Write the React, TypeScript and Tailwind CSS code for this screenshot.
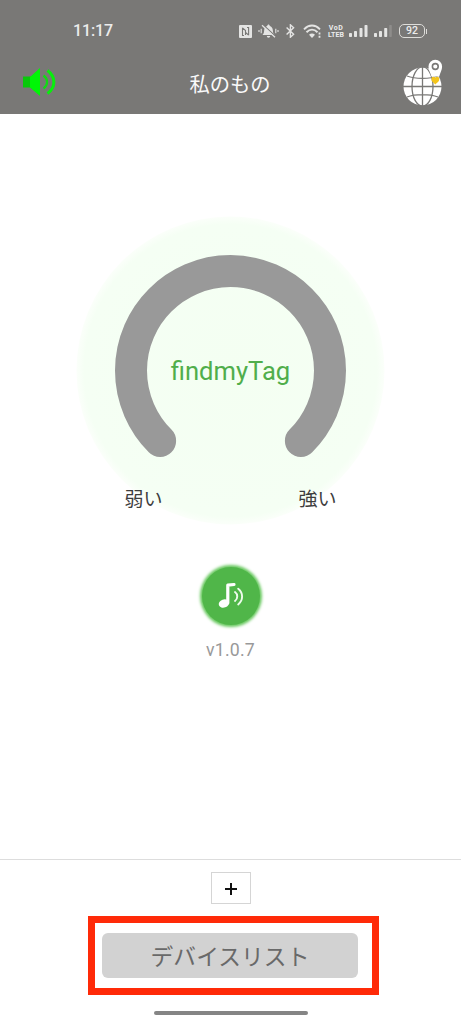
import React from "react";

function StatusBar() {
  return (
    <div className="flex h-[62px] items-center pl-[73px] text-[#ececec]">
      <span className="w-[166px] whitespace-nowrap font-['Roboto',sans-serif] text-[16px] leading-none font-medium tracking-[-0.1px]">11:17</span>
      <svg className="mr-[6px] shrink-0" width="13" height="13" viewBox="0 0 13 13">
        <rect width="13" height="13" rx="1" fill="#e4e4e3" />
        <path d="M5 10.5H3.5V2.8M8 2.5h1.6v7.7M3.5 2.8L6.5 5.5V10M6.6 7.5l3 2.7" fill="none" stroke="#797876" strokeWidth="1.1" />
      </svg>
      <svg className="mr-[7px] shrink-0" width="21" height="16" viewBox="0 0 21 16" fill="none">
        <path d="M4.5 12c1.5-1.5 1.5-3 1.7-5 .2-2 1.3-3.5 3-4 .3-2 2.3-2 2.6 0 1.7.5 2.8 2 3 4 .2 2 .2 3.5 1.7 5z" fill="#e4e4e3" />
        <path d="M8.8 13h3.4a1.7 1.7 0 0 1-3.4 0" fill="#e4e4e3" />
        <path d="M5 1.7l13 12" stroke="#797876" strokeWidth="1.2" />
        <path d="M4 2.3l13 12" stroke="#e4e4e3" strokeWidth="1.3" />
        <path d="M1 7v2M3.2 5.8v4.4M17.8 5.8v4.4M20 7v2" stroke="#e4e4e3" strokeWidth="1.1" />
      </svg>
      <svg className="mr-[8px] shrink-0" width="9" height="14" viewBox="0 0 9 14" fill="none" stroke="#e4e4e3" strokeWidth="1.4">
        <path d="M.6 3.5l7 6.8-3.2 2.9V.8l3.2 2.9-7 6.8" />
      </svg>
      <svg className="mr-[5px] shrink-0" width="20" height="15" viewBox="0 0 20 15" fill="none" stroke="#e4e4e3">
        <path d="M1 5.3c5-5 11-5 16 0M3.5 8.2c3.3-3.2 7.7-3.2 11 0" strokeWidth="1.9" />
        <path d="M6 10.8c1.8-1.7 4.2-1.7 6 0L9 14z" fill="#e4e4e3" stroke="none" />
        <path d="M16.5 8.5v2M16.5 11.8v2" strokeWidth="1.8" />
      </svg>
      <div className="mr-[5px] flex w-4 shrink-0 flex-col items-center font-['Roboto',sans-serif] text-[7px] leading-[8px] font-bold whitespace-nowrap">
        <span className="tracking-[0.6px]">VoD</span>
        <span className="-mt-px">LTEB</span>
      </div>
      <svg className="mr-[6px] shrink-0" width="19" height="14" viewBox="0 0 19 14" fill="#e4e4e3">
        <rect y="9" width="3" height="4" rx=".7" /><rect x="5" y="7" width="3" height="6" rx=".7" /><rect x="10.5" y="4" width="3" height="9" rx=".7" /><rect x="15.5" y="1" width="3" height="12" rx=".7" />
      </svg>
      <svg className="mr-[7px] shrink-0" width="18" height="14" viewBox="0 0 18 14" fill="#e4e4e3">
        <rect y="9" width="3" height="4" rx=".7" /><rect x="5" y="7" width="3" height="6" rx=".7" /><rect x="10.2" y="4" width="3" height="9" rx=".7" /><rect x="15.2" y="1" width="2.6" height="12" rx=".7" fill="#8e8d8b" />
      </svg>
      <div className="flex h-[14px] w-[26px] shrink-0 items-center justify-center rounded-[5px] border border-[#deddda] font-['Roboto',sans-serif] text-[10.5px] leading-none font-medium">92</div>
      <div className="ml-px h-[5px] w-px shrink-0 bg-[#deddda]" />
    </div>
  );
}

function Speaker() {
  return (
    <svg width="36" height="30" viewBox="0 0 36 30" fill="none">
      <rect x="2" y="9.5" width="9" height="11" fill="#08c90a" />
      <path d="M9 10l10-9v28L9 20.5z" fill="#00f606" />
      <path d="M22.5 8.5c4.8 3.4 4.8 9.6 0 13" stroke="#10dc12" strokeWidth="2.2" />
      <path d="M26.5 3.5c8.5 6.3 8.5 16.7 0 23" stroke="#08ee0c" strokeWidth="3" />
    </svg>
  );
}

function Globe() {
  return (
    <svg width="42" height="48" viewBox="0 0 42 48" fill="none">
      <circle cx="20.5" cy="28.5" r="19" fill="#fff" />
      <g stroke="#797876" strokeWidth="1.3">
        <path d="M20.5 9v39M1 28.5h39M5 18c8 3.2 23 3.2 31 0M5 39c8-3.2 23-3.2 31 0" />
        <ellipse cx="20.5" cy="28.5" rx="10.5" ry="19.6" />
      </g>
      <path d="M26.5 8.5a6.8 6.8 0 0 1 13.6 0c0 3.4-1.8 6-2.9 10h-7.8c-1.1-4-2.9-6.6-2.9-10z" fill="#fff" />
      <circle cx="33.3" cy="8.5" r="2.9" stroke="#797876" strokeWidth="1.6" />
      <path d="M29.4 21c0-2.4 2.6-3 3.9-1.3 1.4-1.7 4-1.1 4 1.3 0 2.6-2 3.4-4 5.4-1.9-2-3.9-2.8-3.9-5.4z" fill="#f4c51c" />
    </svg>
  );
}

export default function App() {
  return (
    <main className="flex h-[1024px] w-[461px] flex-col overflow-hidden bg-white font-['Noto_Sans_CJK_JP',sans-serif]">
      <header className="h-[114px] shrink-0 bg-[#797876]">
        <StatusBar />
        <div className="flex h-[46px] items-start justify-between pr-[17px] pl-[21px]">
          <div className="w-[37px] pt-[5px]"><Speaker /></div>
          <h1 className="pt-[6px] text-[20.3px] leading-[30px] text-[#fafafa]">私のもの</h1>
          <div className="-mt-[4px] w-[42px]"><Globe /></div>
        </div>
      </header>
      <section className="flex h-[746px] shrink-0 flex-col items-center border-b border-[#dddddd] pt-[102px]">
        <div className="grid size-[310px] place-items-center">
          <svg className="col-start-1 row-start-1" width="310" height="310" viewBox="0 0 310 310" fill="none">
            <defs>
              <radialGradient id="halo">
                <stop offset="0" stopColor="#f4fff2" />
                <stop offset=".95" stopColor="#f5fff4" />
                <stop offset="1" stopColor="#fbfffa" />
              </radialGradient>
            </defs>
            <circle cx="154.5" cy="154.5" r="154" fill="url(#halo)" />
            <path d="M84.1 224.9a99.5 99.5 0 1 1 140.8 0" stroke="#999999" strokeWidth="32" strokeLinecap="round" />
          </svg>
          <div className="col-start-1 row-start-1 flex w-[212px] flex-col">
            <span className="pt-[126px] text-center font-['Roboto',sans-serif] text-[25.6px] leading-[30px] text-[#50ae4b]">findmyTag</span>
            <div className="flex justify-between pt-[98px] text-[19px] leading-[28px] text-[#3d3d3d]">
              <span>弱い</span><span>強い</span>
            </div>
          </div>
        </div>
        <button className="mt-[41px] flex size-[58px] shrink-0 items-center justify-center rounded-full bg-[#50b649] shadow-[0_0_3px_2px_#67c85e]" aria-label="音">
          <svg width="28" height="30" viewBox="0 0 28 30" fill="none">
            <ellipse cx="6.9" cy="22.5" rx="5.3" ry="4.1" transform="rotate(-20 6.9 22.5)" fill="#fff" />
            <path d="M10.8 22V4.2l6.2-.7" stroke="#fff" strokeWidth="3.2" strokeLinejoin="round" strokeLinecap="round" />
            <path d="M18 11c3 2.2 3 6.8 0 9M21.2 7.7c5.2 4.2 5.2 11.5 0 15.7" stroke="#eefbed" strokeWidth="1.9" strokeLinecap="round" />
          </svg>
        </button>
        <span className="mt-[13px] font-['Roboto',sans-serif] text-[17.7px] leading-[24px] tracking-[0.2px] text-[#999999]">v1.0.7</span>
      </section>
      <footer className="flex flex-1 flex-col items-center pt-[12px]">
        <button className="flex h-8 w-[40px] shrink-0 items-center justify-center border border-[#d5d5d5] bg-white pt-[2px]" aria-label="+">
          <svg width="12" height="12" viewBox="0 0 12 12" stroke="#111" strokeWidth="2"><path d="M6 0v12M0 6h12" /></svg>
        </button>
        <div className="mt-[12px] ml-[6px] flex h-[79px] w-[291px] shrink-0 items-center border-[7px] border-[#ff2a08] pl-[7px]">
          <button className="h-[45px] w-[256px] rounded-[6px] bg-[#d2d2d2] text-[22.8px] leading-[45px] text-[#696969]">デバイスリスト</button>
        </div>
        <div className="mt-[16px] h-1 w-[154px] shrink-0 rounded-full bg-[#858585]" />
      </footer>
    </main>
  );
}
